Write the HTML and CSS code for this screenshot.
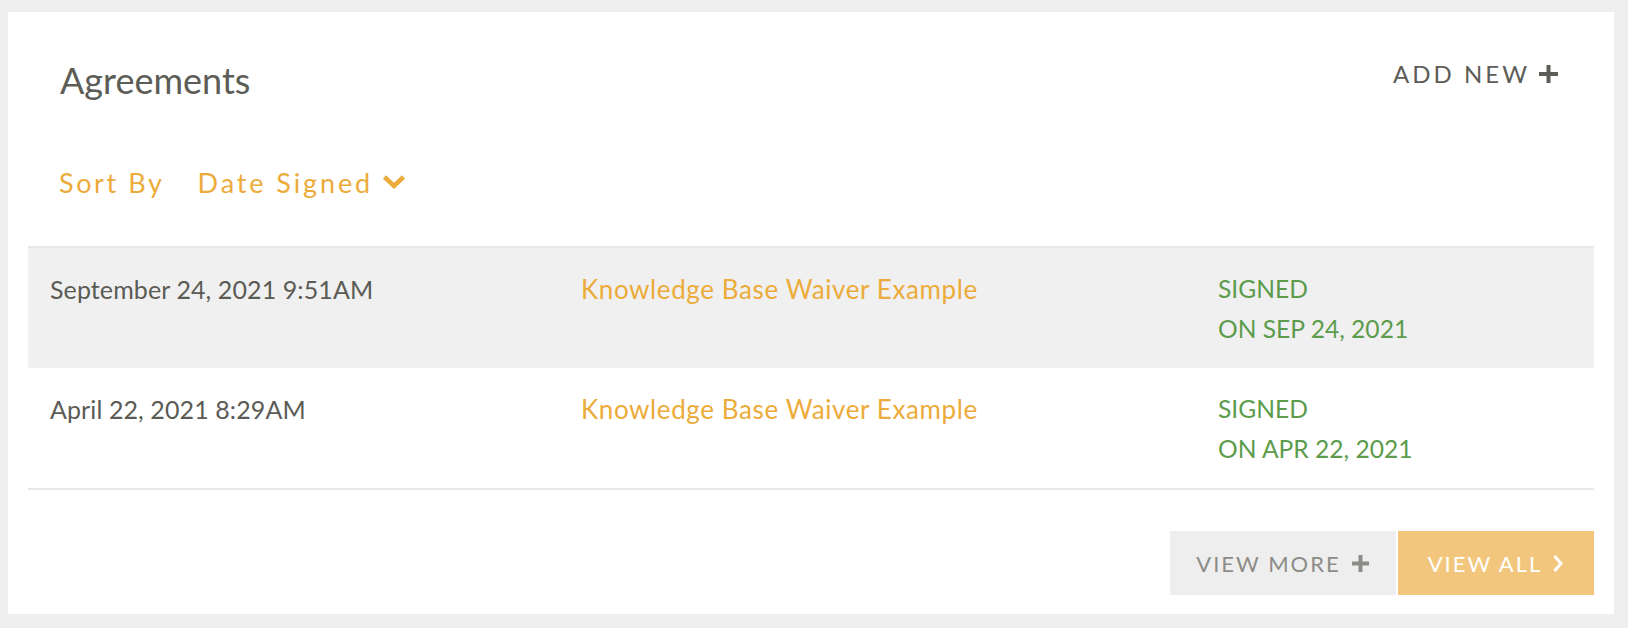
FILE: index.html
```html
<!DOCTYPE html>
<html lang="en">
    <head>
        <meta charset="UTF-8">
        <meta name="viewport" content="width=device-width, initial-scale=1.0">
        <title>Agreements</title>
        <link rel="stylesheet" href="styles.css">
    </head>
    <body>
        <div class="card">
            <div class="card-header">
                <h2>Agreements</h2>
                <a class="add-new" href="#">ADD NEW
                    <svg width="21" height="20" viewBox="0 0 21 20"><path d="M10.5 1v18M1 10h19" stroke="currentColor" stroke-width="4"/></svg>
                </a>
            </div>

            <div class="sort-bar">
                <span class="sort-label">Sort By</span>
                <span class="sort-value">Date Signed<svg width="24" height="16" viewBox="0 0 24 16"><polyline points="2.5,3 12,12 21.5,3" fill="none" stroke="currentColor" stroke-width="4.5"/></svg></span>
            </div>

            <div class="agreements">
                <div class="row shaded">
                    <div class="cell date">September 24, 2021 9:51AM</div>
                    <div class="cell"><a class="doc-link" href="#">Knowledge Base Waiver Example</a></div>
                    <div class="cell status">SIGNED<br>ON SEP 24, 2021</div>
                </div>
                <div class="row">
                    <div class="cell date">April 22, 2021 8:29AM</div>
                    <div class="cell"><a class="doc-link" href="#">Knowledge Base Waiver Example</a></div>
                    <div class="cell status">SIGNED<br>ON APR 22, 2021</div>
                </div>
            </div>

            <div class="actions">
                <button class="btn btn-more">VIEW MORE
                    <svg width="19" height="19" viewBox="0 0 19 19"><path d="M9.5 1v17M1 9.5h17" stroke="currentColor" stroke-width="4"/></svg>
                </button>
                <button class="btn btn-all">VIEW ALL
                    <svg width="12" height="19" viewBox="0 0 12 19"><polyline points="2.5,2 9,9.5 2.5,17" fill="none" stroke="currentColor" stroke-width="3"/></svg>
                </button>
            </div>
        </div>
    </body>
</html>
```

FILE: styles.css
```css
body {
    margin: 0;
    padding: 12px 14px 15px 8px;
    background-color: #eeeeee;
    font-family: 'Lato', 'Liberation Sans', sans-serif;
}

.card {
    background-color: #ffffff;
    padding: 0 20px 19px 20px;
}

.card-header {
    display: flex;
    justify-content: space-between;
    align-items: flex-start;
    height: 88px;
    padding: 0 35px 0 32px;
}

.card-header h2 {
    margin: 0;
    padding-top: 48px;
    font-size: 36px;
    font-weight: 400;
    line-height: 40px;
    color: #5d5d57;
}

.add-new {
    display: flex;
    align-items: center;
    gap: 8px;
    padding-top: 47px;
    font-size: 24px;
    letter-spacing: 3px;
    color: #5d5d57;
    text-decoration: none;
    line-height: 30px;
}

.sort-bar {
    display: flex;
    gap: 33px;
    height: 146px;
    box-sizing: border-box;
    padding: 68px 0 0 31px;
    font-size: 27px;
    letter-spacing: 2.6px;
    color: #ecab3a;
    line-height: 30px;
}

.sort-value {
    letter-spacing: 2.9px;
}

.sort-value svg {
    margin-left: 9px;
    vertical-align: 3px;
}

.agreements {
    border-top: 2px solid #e8e8e8;
    border-bottom: 2px solid #e8e8e8;
}

.row {
    display: grid;
    grid-template-columns: 533px 637px 1fr;
    height: 120px;
    box-sizing: border-box;
    padding-top: 21px;
}

.row.shaded {
    background-color: #f0f0f0;
}

.cell {
    padding-left: 20px;
    line-height: 40px;
}

.date {
    padding-left: 22px;
    font-size: 25px;
    letter-spacing: 0.1px;
    color: #5b5b55;
}

.doc-link {
    font-size: 26px;
    letter-spacing: 0.6px;
    color: #ecab3a;
    text-decoration: none;
}

.status {
    font-size: 24.6px;
    color: #5c9c4c;
}

.actions {
    display: flex;
    justify-content: flex-end;
    gap: 2px;
    padding-top: 41px;
}

.btn {
    display: flex;
    align-items: center;
    justify-content: center;
    gap: 10px;
    height: 64px;
    border: none;
    font-family: inherit;
    font-size: 22px;
    letter-spacing: 2px;
    cursor: pointer;
}

.btn-more {
    width: 226px;
    background-color: #eeeeee;
    color: #8c8c87;
}

.btn-all {
    width: 196px;
    background-color: #f2c77d;
    color: #ffffff;
}
```
